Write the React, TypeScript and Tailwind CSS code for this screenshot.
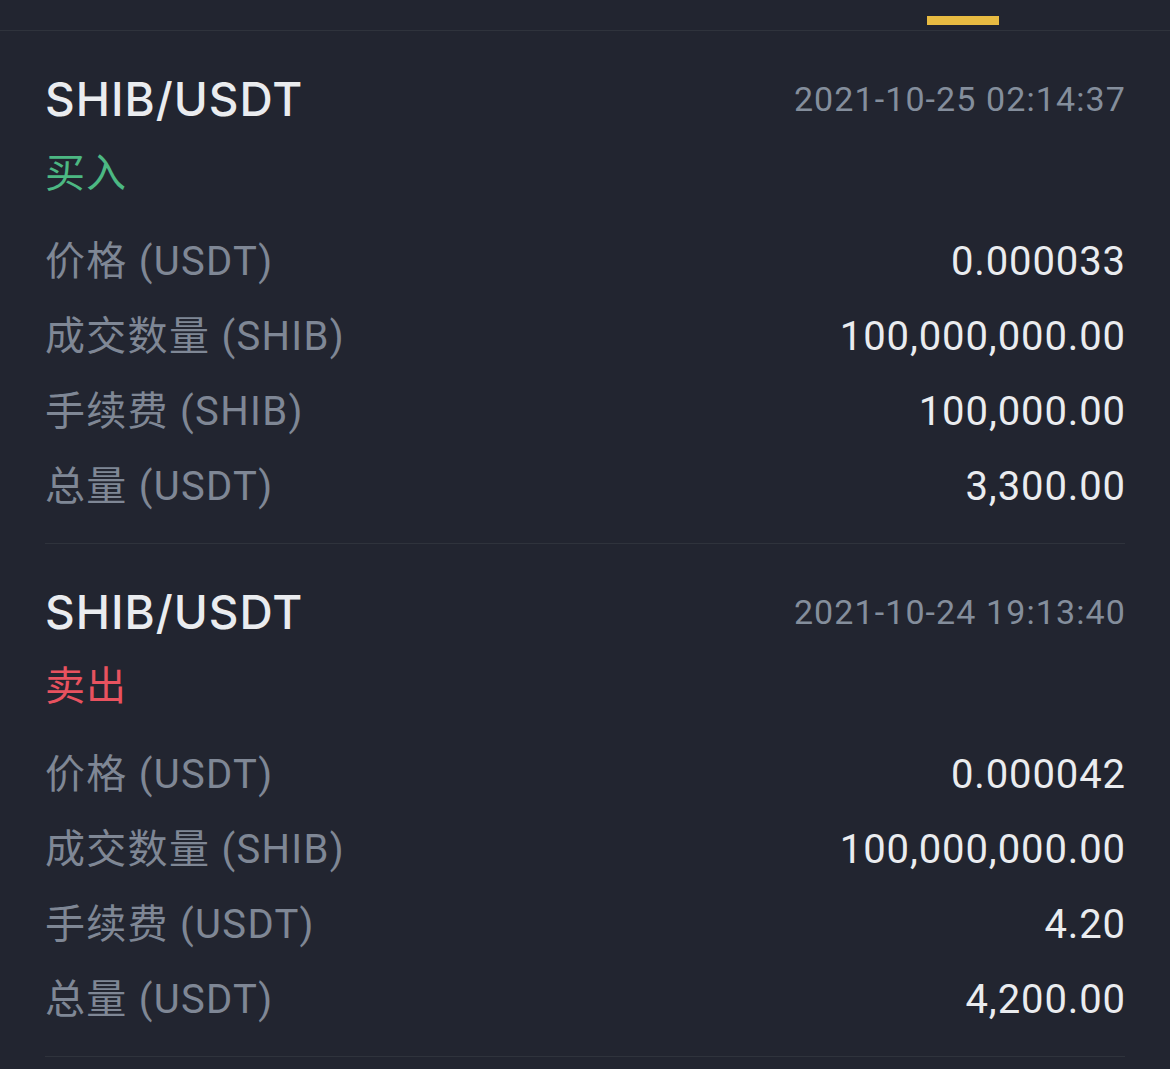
import React from "react";

type Trade = {
  pair: string;
  time: string;
  side: "buy" | "sell";
  rows: [string, string][];
};

const trades: Trade[] = [
  {
    pair: "SHIB/USDT",
    time: "2021-10-25 02:14:37",
    side: "buy",
    rows: [
      ["价格 (USDT)", "0.000033"],
      ["成交数量 (SHIB)", "100,000,000.00"],
      ["手续费 (SHIB)", "100,000.00"],
      ["总量 (USDT)", "3,300.00"],
    ],
  },
  {
    pair: "SHIB/USDT",
    time: "2021-10-24 19:13:40",
    side: "sell",
    rows: [
      ["价格 (USDT)", "0.000042"],
      ["成交数量 (SHIB)", "100,000,000.00"],
      ["手续费 (USDT)", "4.20"],
      ["总量 (USDT)", "4,200.00"],
    ],
  },
];

const cjk = "font-['Roboto','Noto_Sans_CJK_SC',sans-serif]";

function Card({ t }: { t: Trade }) {
  return (
    <div className="pt-[31px] pb-[19px] border-b border-[#2f333c]">
      <div className="h-[75px] flex items-center justify-between">
        <span className="font-['Inter',sans-serif] text-[46px] font-medium text-[#eaecef] tracking-[1px]">
          {t.pair}
        </span>
        <span className="font-['Roboto',sans-serif] text-[34px] text-[#848e9c] tracking-[1.1px] mr-[-1px]">
          {t.time}
        </span>
      </div>
      <div className="h-[74px] flex items-center">
        <span
          className={
            t.side === "buy"
              ? `${cjk} text-[40px] text-[#4cb883] tracking-[1px]`
              : `${cjk} text-[40px] text-[#e8525f] tracking-[1px]`
          }
        >
          {t.side === "buy" ? "买入" : "卖出"}
        </span>
      </div>
      <div className="mt-[13px] flex flex-col">
        {t.rows.map(([k, v]) => (
          <div key={k} className="h-[75px] flex items-center justify-between">
            <span className={`${cjk} text-[40px] text-[#7f8795] tracking-[1.3px]`}>{k}</span>
            <span className="font-['Roboto',sans-serif] text-[40px] text-[#eaecef] tracking-[0.9px] mr-[-1px]">
              {v}
            </span>
          </div>
        ))}
      </div>
    </div>
  );
}

export default function App() {
  return (
    <div className="w-[1170px] h-[1069px] bg-[#222530] overflow-hidden">
      <div className="h-[31px] border-b border-[#2f333c] flex items-start">
        <div className="ml-[927px] mt-[16px] w-[72px] h-[9px] bg-[#e8bb42]" />
      </div>
      <div className="px-[45px]">
        {trades.map((t, i) => (
          <Card key={i} t={t} />
        ))}
      </div>
    </div>
  );
}
